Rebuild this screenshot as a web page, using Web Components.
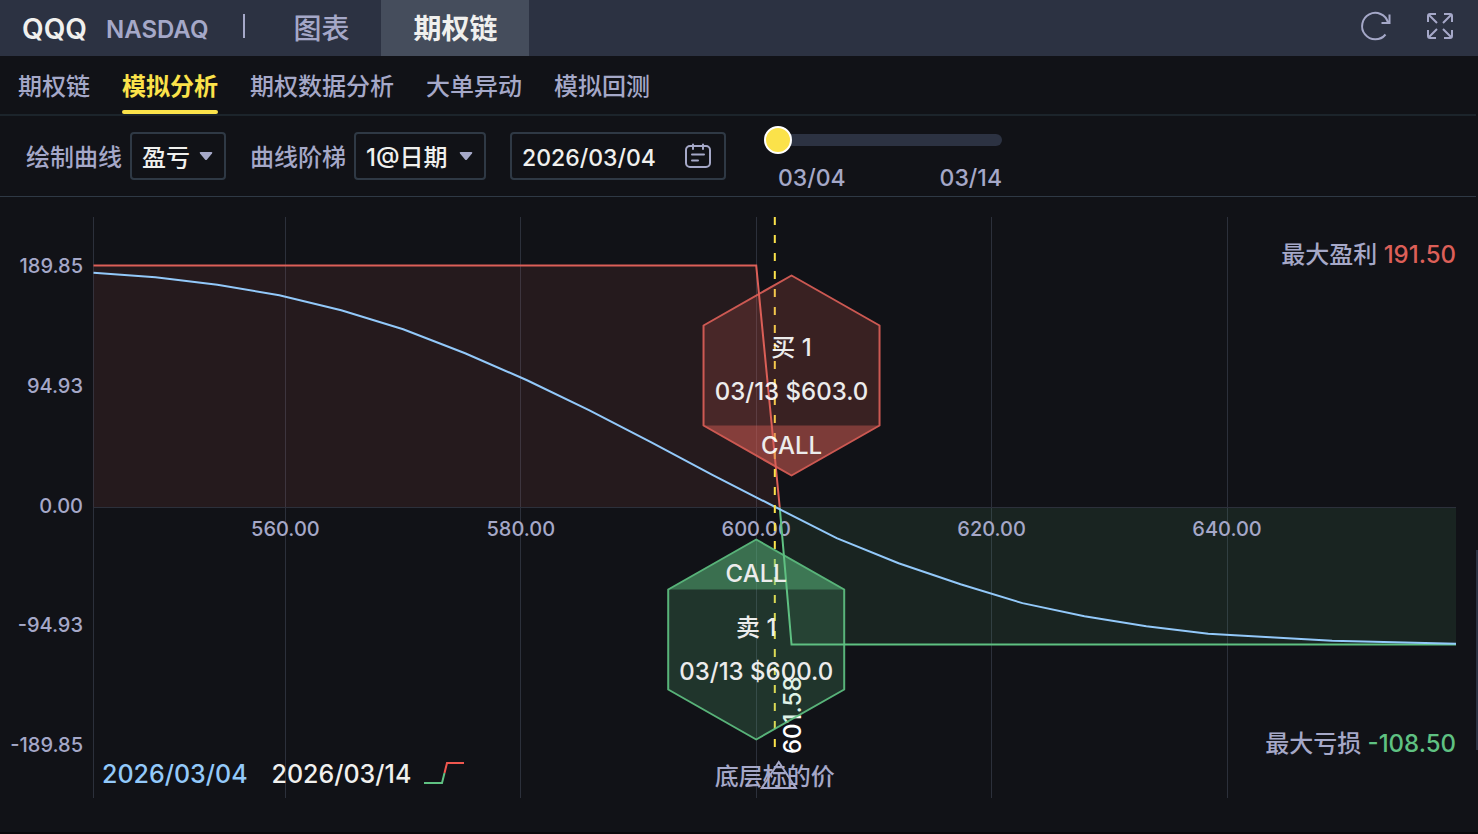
<!DOCTYPE html>
<html lang="zh-CN">
<head>
<meta charset="utf-8">
<meta name="viewport" content="width=device-width, initial-scale=1">
<title>QQQ 期权链</title>
<style>
  :root {
    --bg: #111217;
    --bar: #2c3242;
    --bar-active: #454d5c;
    --line: #2f3945;
    --muted: #a5a8c8;
    --text: #f0f0ee;
    --yellow: #fbe24a;
    --red: #dc5f58;
    --green: #5fc182;
    --blue: #93c9fa;
  }
  body {
    margin: 0;
    background: var(--bg);
    color: var(--muted);
    font: 500 24px/32px Inter, "Noto Sans CJK SC", sans-serif;
  }
</style>
</head>
<body>
<option-page></option-page>

<script>
class TopBar extends HTMLElement {
  constructor() {
    super();
    this.attachShadow({ mode: "open" });
    this.shadowRoot.innerHTML = `
      <style>
        :host { display:flex; align-items:center; height:56px; padding:0 22px; background:var(--bar); }
        h1 { margin:0 19px 0 0; padding-top:2px; font-size:28px; font-weight:600; color:var(--text); }
        .market { padding-top:4px; font-weight:600; }
        .sep { width:2px; height:24px; margin:0 16px 4px 35px; background:var(--muted); }
        nav { display:flex; height:100%; }
        a { display:flex; align-items:center; padding:2px 32px 0; font-size:28px; color:inherit; text-decoration:none; }
        a[aria-current] { background:var(--bar-active); color:var(--text); font-weight:600; }
        .tools { display:flex; gap:32px; margin:0 0 4px auto; }
        button { width:32px; height:32px; padding:0; border:0; background:none; color:inherit; }
        svg { display:block; fill:none; stroke:currentColor; stroke-width:2; }
      </style>
      <h1>QQQ</h1>
      <span class="market">NASDAQ</span>
      <span class="sep"></span>
      <nav>
        <a href="#chart">图表</a>
        <a href="#chain" aria-current="page">期权链</a>
      </nav>
      <div class="tools">
        <button aria-label="刷新">
          <svg width="32" height="32" viewBox="0 0 32 32"><path d="M25.500 24.500A13.2 13.2 0 1 1 28 12.500M29.500 4.500V13H21.500"/></svg>
        </button>
        <button aria-label="全屏">
          <svg width="32" height="32" viewBox="0 0 32 32"><path d="M4 12V6Q4 4 6 4H12M4.500 4.500L13 13M20 4H26Q28 4 28 6V12M27.500 4.500L19 13M4 20V26Q4 28 6 28H12M4.500 27.500L13 19M28 20V26Q28 28 26 28H20M27.500 27.500L19 19"/></svg>
        </button>
      </div>
    `;
  }
}
customElements.define("top-bar", TopBar);

class SubTabs extends HTMLElement {
  constructor() {
    super();
    this.attachShadow({ mode: "open" });
    this.shadowRoot.innerHTML = `
      <style>
        :host { display:flex; gap:32px; height:58px; padding:0 18px; border-bottom:2px solid #1c242b; }
        ::slotted(a) { box-sizing:border-box; padding:15px 0 7px; border-bottom:4px solid transparent; color:var(--muted); text-decoration:none; white-space:nowrap; }
        ::slotted(a[aria-current]) { position:relative; color:var(--yellow); font-weight:700; }
        ::slotted(a[aria-current])::after { content:""; position:absolute; left:0; right:0; bottom:-4px; height:4px; border-radius:2px; background:var(--yellow); }
      </style>
      <slot></slot>
    `;
  }
}
customElements.define("sub-tabs", SubTabs);

// Labelled drop-down: <select-field label="..." options="a,b">
class SelectField extends HTMLElement {
  constructor() {
    super();
    this.attachShadow({ mode: "open" });
  }

  connectedCallback() {
    const options = this.getAttribute("options").split(",");
    this.shadowRoot.innerHTML = `
      <style>
        :host { display:flex; align-items:center; gap:8px; }
        label { padding-top:4px; }
        .box { position:relative; }
        select {
          display:block; box-sizing:border-box; width:var(--field-width, auto); height:48px; padding:4px 34px 0 10px; margin:0;
          appearance:none; border:2px solid var(--line); border-radius:4px;
          background:none; color:var(--text); font:inherit;
        }
        option { background:var(--bg); }
        svg { position:absolute; right:13px; top:19px; fill:var(--muted); pointer-events:none; }
      </style>
      <label for="field">${this.getAttribute("label")}</label>
      <div class="box">
        <select id="field">${options.map(o => `<option>${o}</option>`).join("")}</select>
        <svg width="14" height="10" viewBox="0 0 14 10"><path d="M1.500 1H12.500Q14 1 13 2.500L8 8.500Q7 9.500 6 8.500L1 2.500Q0 1 1.500 1Z"/></svg>
      </div>
    `;
  }
}
customElements.define("select-field", SelectField);

class DateField extends HTMLElement {
  constructor() {
    super();
    this.attachShadow({ mode: "open" });
  }

  connectedCallback() {
    this.shadowRoot.innerHTML = `
      <style>
        :host { display:flex; align-items:center; box-sizing:border-box; width:216px; height:48px; padding:0 12px 0 10px; border:2px solid var(--line); border-radius:4px; }
        input { flex:1; min-width:0; padding:4px 0 0; border:0; background:none; color:var(--text); font:inherit; font-size:23px; outline:0; }
        button { width:28px; height:28px; padding:0; border:0; background:none; color:inherit; }
        svg { display:block; fill:none; stroke:currentColor; stroke-width:2; stroke-linecap:round; }
      </style>
      <input type="text" aria-label="日期" value="${this.getAttribute("value")}">
      <button aria-label="选择日期">
        <svg width="28" height="28" viewBox="0 0 28 28"><rect x="2" y="4" width="24" height="21" rx="4"/><path d="M9 2.500V7M19 2.500V7M8 12.500H20M8 18.500H14"/></svg>
      </button>
    `;
  }
}
customElements.define("date-field", DateField);

class DateSlider extends HTMLElement {
  constructor() {
    super();
    this.attachShadow({ mode: "open" });
  }

  connectedCallback() {
    this.shadowRoot.innerHTML = `
      <style>
        :host { display:block; width:238px; }
        input { display:block; width:100%; height:28px; margin:0; appearance:none; background:none; }
        input::-webkit-slider-runnable-track { height:12px; border-radius:6px; background:var(--bar); }
        input::-webkit-slider-thumb {
          appearance:none; box-sizing:border-box; width:28px; height:28px; margin-top:-8px;
          border:2px solid #fff; border-radius:50%; background:var(--yellow);
        }
        .ends { display:flex; justify-content:space-between; padding:8px 0 0 14px; font-size:23px; }
      </style>
      <input type="range" min="0" max="10" value="0" aria-label="模拟日期">
      <div class="ends"><span>${this.getAttribute("from")}</span><span>${this.getAttribute("to")}</span></div>
    `;
  }
}
customElements.define("date-slider", DateSlider);

class PnlChart extends HTMLElement {
  constructor() {
    super();
    this.attachShadow({ mode: "open" });
    this.shadowRoot.innerHTML = `
      <style>
        :host { display:block; position:relative; overflow:hidden; }
        svg.plot { position:absolute; top:0; left:0; width:100%; height:100%; }
        text { fill:var(--muted); dominant-baseline:central; }
        .tick { font-size:20px; }
        .mid { text-anchor:middle; }
        .end { text-anchor:end; }
        .grid { stroke:#2c303b; shape-rendering:crispEdges; }
        .curve { fill:none; stroke-width:2; }
        .marker { opacity:.92; }
        .marker text { fill:#fff; }
        .legend { position:absolute; left:102px; bottom:42px; display:flex; align-items:center; gap:24px; font-size:25px; }
        .legend span:first-child { color:var(--blue); }
        .legend span:last-child { display:flex; align-items:center; gap:13px; color:var(--text); }
      </style>
      <svg class="plot"></svg>
      <div class="legend">
        <span>2026/03/04</span>
        <span>2026/03/14
          <svg width="40" height="24" viewBox="0 2 40 24" fill="none" stroke-width="2">
            <path d="M0 23H18L20.500 13" stroke="#5fc182"/><path d="M20.500 13L23 3H40" stroke="#f0574f"/>
          </svg>
        </span>
      </div>
    `;
    this.plot = this.shadowRoot.querySelector(".plot");
    this.resizer = new ResizeObserver(() => this._draw());

    this.prices = [543.7, 659.45];
    this.range = 229.9;
    this.spot = 601.58;
    // today's P&L, sampled evenly across the price range
    this.today = [185.8, 182.2, 176.3, 168, 156.1, 141.1, 122.1, 100.7, 77, 51.7, 25.6, 0.6,
      -24.3, -44.1, -60.7, -75.7, -86, -93.9, -99.9, -102.6, -105.4, -106.6, -107.8];
  }

  connectedCallback() { this.resizer.observe(this); this._draw(); }
  disconnectedCallback() { this.resizer.disconnect(); }

  _hexagon(cx, cy, color, up, side, strike) {
    const w = 88, h = 100, k = 50;
    const cap = up
      ? `M${cx - w} ${cy - k}L${cx} ${cy - h}L${cx + w} ${cy - k}Z`
      : `M${cx - w} ${cy + k}L${cx} ${cy + h}L${cx + w} ${cy + k}Z`;
    const rows = up ? [-66, -12, 32] : [70, -28, 16];
    return `
      <g class="marker">
        <path d="M${cx} ${cy - h}l${w} ${k}v${h}l${-w} ${k}l${-w} ${-k}v${-h}Z" fill="${color}" fill-opacity=".22" stroke="${color}" stroke-width="2" stroke-linejoin="round"/>
        <path d="${cap}" fill="${color}" fill-opacity=".46"/>
        <text class="mid" x="${cx}" y="${cy + rows[0]}">CALL</text>
        <text class="mid" x="${cx}" y="${cy + rows[1]}">${side} 1</text>
        <text class="mid" x="${cx}" y="${cy + rows[2]}">03/13 $${strike}</text>
      </g>`;
  }

  _draw() {
    const W = this.clientWidth, H = this.clientHeight;
    if (!W || !H) return;
    const left = 93.5, right = W - 20, top = 20, bottom = H - 34;
    const mid = (top + bottom) / 2;
    const [p0, p1] = this.prices;
    const x = p => left + (p - p0) / (p1 - p0) * (right - left);
    const y = v => mid - v / this.range * (bottom - top) / 2;
    const step = (right - left) / (this.today.length - 1);
    const line = this.today.map((v, i) => `${left + i * step},${y(v)}`).join(" ");
    const even = 602;
    const sx = x(this.spot);

    this.plot.innerHTML = `
      <line class="grid" x1="${left}" x2="${left}" y1="${top}" y2="${bottom}"/>
      ${[560, 580, 600, 620, 640].map(p => `<line class="grid" x1="${x(p)}" x2="${x(p)}" y1="${top}" y2="${bottom}"/>`).join("")}
      <path d="M${left} ${y(191.5)}H${x(600)}L${x(even)} ${mid}H${left}Z" fill="#dc5f58" fill-opacity=".1"/>
      <path d="M${x(even)} ${mid}L${x(603)} ${y(-108.5)}H${right}V${mid}Z" fill="#5fc182" fill-opacity=".1"/>
      <line class="grid" x1="${left}" x2="${right}" y1="${mid}" y2="${mid}"/>
      ${[189.85, 94.93, 0, -94.93, -189.85].map(v => `<text class="tick end" x="83" y="${y(v) - 2}">${v.toFixed(2)}</text>`).join("")}
      ${[560, 580, 600, 620, 640].map(p => `<text class="tick mid" x="${x(p)}" y="${mid + 21}">${p.toFixed(2)}</text>`).join("")}
      <path class="curve" stroke="#dc5f58" d="M${left} ${y(191.5)}H${x(600)}L${x(even)} ${mid}"/>
      <path class="curve" stroke="#5fc182" d="M${x(even)} ${mid}L${x(603)} ${y(-108.5)}H${right}"/>
      <polyline class="curve" stroke="#93c9fa" points="${line}"/>
      <line x1="${sx}" x2="${sx}" y1="${top}" y2="${bottom - 50}" stroke="#fbe24a" stroke-width="2" stroke-dasharray="8 10"/>
      <text transform="translate(${sx + 18} ${bottom - 44}) rotate(-90)" style="fill:#fff">${this.spot}</text>
      <text class="mid" x="${sx}" y="${bottom - 22}">底层标的价</text>
      <path d="M${sx + 4} ${bottom - 36}l17 26h-34Z" fill="none" stroke="#a5a8c8" stroke-width="2"/>
      ${this._hexagon(x(603), mid - 132, "#dc5f58", false, "买", "603.0")}
      ${this._hexagon(x(600), mid + 132, "#5fc182", true, "卖", "600.0")}
      <text class="end" x="${right}" y="${top + 37}">最大盈利 <tspan fill="#dc5f58">191.50</tspan></text>
      <text class="end" x="${right}" y="${bottom - 55}">最大亏损 <tspan fill="#5fc182">-108.50</tspan></text>
    `;
  }
}
customElements.define("pnl-chart", PnlChart);

class OptionPage extends HTMLElement {
  constructor() {
    super();
    this.attachShadow({ mode: "open" });
    this.shadowRoot.innerHTML = `
      <style>
        :host { display:flex; flex-direction:column; min-height:100vh; }
        main { position:relative; flex:1; display:flex; flex-direction:column; padding-right:2px; border-bottom:2px solid #09080b; }
        .controls { display:flex; align-items:flex-start; gap:24px; box-sizing:border-box; height:81px; padding:10px 26px 0; border-bottom:1px solid var(--line); white-space:nowrap; }
        select-field, date-field { margin-top:6px; }
        .step { --field-width:132px; }
        date-slider { margin-left:14px; }
        pnl-chart { flex:1; min-height:480px; }
        .thumb { position:absolute; right:0; bottom:82px; width:2px; height:200px; background:var(--bar); }
      </style>
      <top-bar></top-bar>
      <main>
        <sub-tabs>
          <a href="#chain">期权链</a>
          <a href="#simulate" aria-current="page">模拟分析</a>
          <a href="#data">期权数据分析</a>
          <a href="#flow">大单异动</a>
          <a href="#backtest">模拟回测</a>
        </sub-tabs>
        <div class="controls">
          <select-field label="绘制曲线" options="盈亏"></select-field>
          <select-field class="step" label="曲线阶梯" options="1@日期"></select-field>
          <date-field value="2026/03/04"></date-field>
          <date-slider from="03/04" to="03/14"></date-slider>
        </div>
        <pnl-chart></pnl-chart>
        <div class="thumb"></div>
      </main>
    `;
  }
}
customElements.define("option-page", OptionPage);
</script>
</body>
</html>
